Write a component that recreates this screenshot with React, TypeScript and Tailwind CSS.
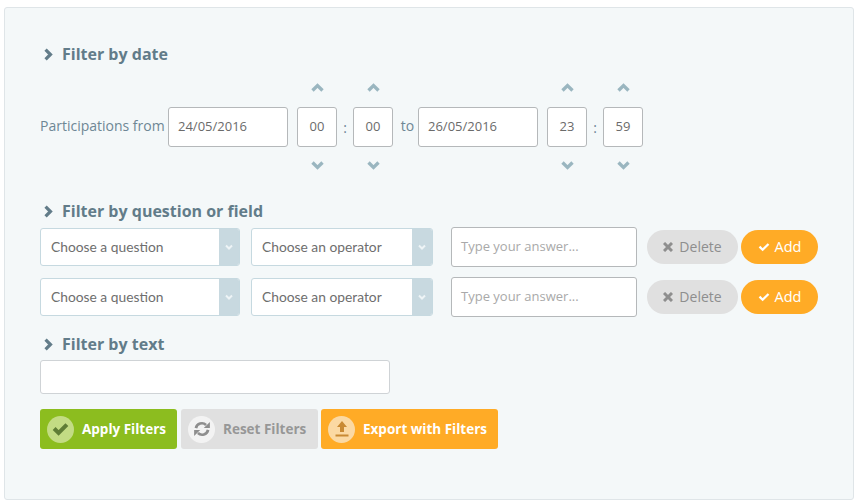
import React from 'react';

// thick font-awesome style glyphs, the icon package ones come out too thin at this size
const Chevron = ({ dir, className }: { dir: 'up' | 'down' | 'right'; className: string }) => {
  const points = dir === 'up' ? '2,9 8,3 14,9' : dir === 'down' ? '2,3 8,9 14,3' : '3,2 9,8 3,14';
  const box = dir === 'right' ? '0 0 12 16' : '0 0 16 12';
  return (
    <svg viewBox={box} className={className} fill="none" stroke="currentColor" strokeWidth="4" strokeLinecap="butt" strokeLinejoin="miter">
      <polyline points={points} />
    </svg>
  );
};

const CheckMark = ({ className, width = 3.6 }: { className: string; width?: number }) => (
  <svg viewBox="0 0 16 13" className={className} fill="none" stroke="currentColor" strokeWidth={width}>
    <polyline points="2,6 6.2,10.2 14,2.4" />
  </svg>
);

const Heading = ({ children, className }: { children: React.ReactNode; className: string }) => (
  <h3 className={`flex items-center text-[16px] leading-[22px] font-bold text-[#627c89] ${className}`}>
    <Chevron dir="right" className="w-[10px] h-[13px] ml-[3px] mr-[9px] text-[#627c89]" />
    {children}
  </h3>
);

const TimeSpinner = ({ value }: { value: string }) => (
  <div className="flex flex-col items-center w-[40px]">
    <Chevron dir="up" className="w-[15px] h-[10px] text-[#9ab6c0]" />
    <div className="mt-[14px] mb-[13px] w-[40px] h-[40px] flex items-center justify-center bg-white border border-[#b5b8ba] rounded-[3px] text-[13px] text-[#6b6b6b]">
      {value}
    </div>
    <Chevron dir="down" className="w-[15px] h-[10px] text-[#9ab6c0]" />
  </div>
);

const DateBox = ({ value }: { value: string }) => (
  <div className="w-[120px] h-[40px] mt-[1px] flex items-center pl-[9px] bg-white border border-[#b5b8ba] rounded-[3px] text-[13px] text-[#6b6b6b]">
    {value}
  </div>
);

const SelectBox = ({ label, className }: { label: string; className: string }) => (
  <div className={`flex h-[38px] bg-white border border-[#c6d9e0] rounded-[3px] overflow-hidden ${className}`}>
    <div className="flex-1 flex items-center pl-[10px] text-[13.8px] text-[#6e6e6e] font-['Lato',sans-serif]">{label}</div>
    <div className="w-[20px] flex items-center justify-center bg-[#c8d9e0]">
      <Chevron dir="down" className="w-[8px] h-[6px] text-[#eef4f6]" />
    </div>
  </div>
);

const QuestionRow = ({ className }: { className: string }) => (
  <div className={`flex items-center h-[40px] ${className}`}>
    <SelectBox label="Choose a question" className="w-[200px]" />
    <SelectBox label="Choose an operator" className="w-[182px] ml-[11px]" />
    <div className="w-[186px] h-[40px] ml-[18px] flex items-center pl-[9px] bg-white border border-[#b5b8ba] rounded-[3px] text-[13px] text-[#a9a9a9]">
      Type your answer...
    </div>
    <button className="w-[91px] h-[34px] ml-[10px] pb-[1px] flex items-center justify-center gap-[6px] rounded-full bg-[#e0e0e0] text-[14px] text-[#8e8e8e]">
      <svg viewBox="0 0 10 10" className="w-[10px] h-[10px] mt-[1px]" fill="none" stroke="currentColor" strokeWidth="3">
        <path d="M1 1 L9 9 M9 1 L1 9" />
      </svg>
      Delete
    </button>
    <button className="w-[77px] h-[34px] ml-[3px] pb-[1px] flex items-center justify-center gap-[5px] rounded-full bg-[#ffab26] text-[14.5px] text-white">
      <CheckMark className="w-[12px] h-[10px] mt-[1px]" width={3} />
      Add
    </button>
  </div>
);

const ActionButton = ({
  label,
  bg,
  text,
  circle,
  className,
  children,
}: {
  label: string;
  bg: string;
  text: string;
  circle: string;
  className: string;
  children: React.ReactNode;
}) => (
  <button className={`h-[40px] flex items-center pl-[7px] rounded-[3px] text-[13.5px] font-bold ${bg} ${text} ${className}`}>
    <span className={`w-[27px] h-[27px] mr-[8px] rounded-full flex items-center justify-center ${circle}`}>{children}</span>
    <span>{label}</span>
  </button>
);

export default function App() {
  return (
    <div className="w-[857px] h-[504px] pt-[7px] pl-[4px] bg-white font-['Open_Sans',sans-serif]">
      <div className="w-[850px] h-[493px] pt-[35px] pl-[35px] bg-[#f4f8f9] border border-[#dfe5e8] rounded-[3px]">
        <Heading className="mb-[18px]">Filter by date</Heading>

        {/* date range */}
        <div className="flex items-center text-[14px] text-[#6e8795]">
          <span className="w-[128px] whitespace-nowrap mb-[3px]">Participations from</span>
          <DateBox value="24/05/2016" />
          <div className="ml-[9px]"><TimeSpinner value="00" /></div>
          <span className="w-[16px] text-center mt-[1px]">:</span>
          <TimeSpinner value="00" />
          <span className="w-[25px] pl-[4px] text-center mb-[3px]">to</span>
          <DateBox value="26/05/2016" />
          <div className="ml-[9px]"><TimeSpinner value="23" /></div>
          <span className="w-[16px] text-center mt-[1px]">:</span>
          <TimeSpinner value="59" />
        </div>

        <Heading className="mt-[30px] mb-[5px]">Filter by question or field</Heading>
        <QuestionRow className="" />
        <QuestionRow className="mt-[10px]" />

        <Heading className="mt-[16px] mb-[5px]">Filter by text</Heading>
        <div className="w-[350px] h-[34px] bg-white border border-[#cfd3d6] rounded-[3px]" />

        <div className="flex mt-[15px]">
          <ActionButton label="Apply Filters" bg="bg-[#8cbd1f]" text="text-white" circle="bg-[#c3dc84]" className="w-[137px]">
            <CheckMark className="w-[17px] h-[14px] text-[#5f7d35]" width={3.8} />
          </ActionButton>
          <ActionButton label="Reset Filters" bg="bg-[#e0e0e0]" text="text-[#979797]" circle="bg-[#f3f3f3]" className="w-[137px] ml-[4px]">
            <svg viewBox="0 0 16 16" className="w-[18px] h-[18px] text-[#8e8e8e]" fill="none" stroke="currentColor" strokeWidth="2.4">
              <path d="M2.6 7.2 A5.4 5.4 0 0 1 11.6 4.4" />
              <path d="M13.4 8.8 A5.4 5.4 0 0 1 4.4 11.6" />
              <path d="M9.6 7.2 H15 V1.8 Z M6.4 8.8 H1 V14.2 Z" fill="currentColor" stroke="none" />
            </svg>
          </ActionButton>
          <ActionButton label="Export with Filters" bg="bg-[#ffab26]" text="text-white" circle="bg-[#fbd9a3]" className="w-[177px] ml-[3px]">
            <svg viewBox="0 0 14 16" className="w-[14px] h-[16px] text-[#c98a33]" fill="currentColor">
              <path d="M7 0 L12 6 H9 V11 H5 V6 H2 Z" />
              <rect x="0.5" y="13.5" width="13" height="2" />
            </svg>
          </ActionButton>
        </div>
      </div>
    </div>
  );
}
